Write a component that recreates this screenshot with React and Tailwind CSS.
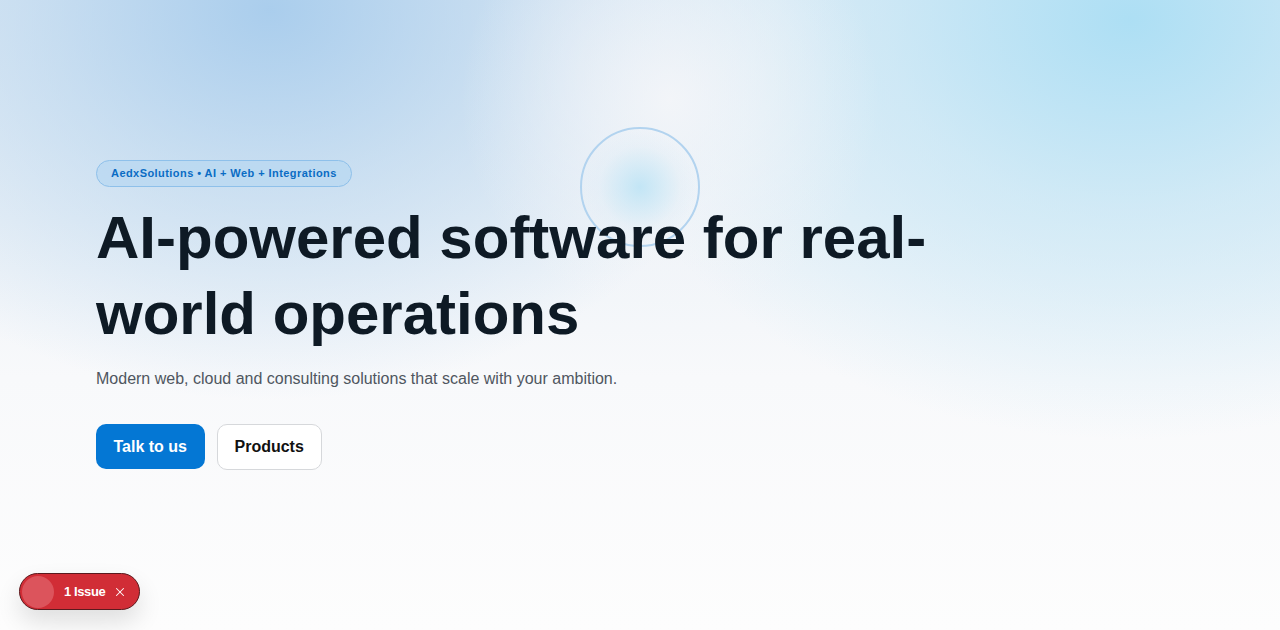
import { X } from "lucide-react";

const App = () => {
    return (
        <div className="relative min-h-[630px] w-full overflow-hidden bg-[#fdfdfd] font-['Liberation_Sans',Arial,sans-serif]">
            {/* background glows */}
            <div className="pointer-events-none absolute inset-0 bg-[linear-gradient(180deg,#e4edf6_0%,#eef3f8_35%,#f8f9fb_60%,#fdfdfd_100%)]" />
            <div className="pointer-events-none absolute -left-[230px] -top-[380px] h-[780px] w-[1000px] rounded-full bg-[radial-gradient(closest-side,rgba(160,200,235,0.85),rgba(175,208,236,0.55)_45%,rgba(200,220,240,0)_100%)]" />
            <div className="pointer-events-none absolute -right-[400px] -top-[400px] h-[840px] w-[1100px] rounded-full bg-[radial-gradient(closest-side,rgba(170,222,244,0.95),rgba(190,228,245,0.6)_45%,rgba(210,235,248,0)_100%)]" />
            <div className="pointer-events-none absolute left-[460px] -top-[120px] h-[440px] w-[420px] rounded-full bg-[radial-gradient(closest-side,rgba(245,246,249,0.9),rgba(245,246,249,0))]" />

            {/* floating orb */}
            <div className="pointer-events-none absolute left-[580px] top-[127px] h-[120px] w-[120px] rounded-full border-2 border-[#b2d3ef] bg-[radial-gradient(closest-side,rgba(190,228,245,0.9),rgba(220,236,246,0.3)_70%,rgba(230,238,246,0))]" />

            <div className="relative px-[96px] pt-[160px]">
                <span className="inline-flex h-[27px] items-center rounded-full border border-[#8ec0ea] bg-[#b9d8f1]/80 px-[14px] text-[11px] font-bold tracking-[0.04em] text-[#0a6cc4]">
                    AedxSolutions • AI + Web + Integrations
                </span>

                <h1 className="mt-[13px] max-w-[900px] text-[60px] font-bold leading-[76px] text-[#0e1a25]">
                    AI-powered software for real-world operations
                </h1>

                <p className="mt-[15px] text-[16px] leading-6 text-[#4f5660]">
                    Modern web, cloud and consulting solutions that scale with your ambition.
                </p>

                <div className="mt-[33px] flex gap-3">
                    <button className="h-[45px] rounded-[10px] bg-[#0477d4] px-[17.5px] text-[16px] font-bold text-white">
                        Talk to us
                    </button>
                    <button className="h-[46px] rounded-[10px] border border-[#d6d8db] bg-white px-[17px] text-[16px] font-bold text-[#111]">
                        Products
                    </button>
                </div>
            </div>

            {/* issue badge */}
            <div className="absolute bottom-[20px] left-[19px] flex h-[37px] items-center gap-2 rounded-full border border-[#5a1a1e] bg-[#d12d36] pl-[2px] pr-[12px] shadow-[0_12px_24px_rgba(0,0,0,0.12)]">
                <span className="h-[32px] w-[32px] rounded-full bg-[#dc545c]" />
                <span className="ml-[2px] text-[13px] font-bold tracking-[-0.03em] text-white">1 Issue</span>
                <X className="h-[14px] w-[14px] text-white" strokeWidth={1.8} />
            </div>
        </div>
    );
};

export default App;
